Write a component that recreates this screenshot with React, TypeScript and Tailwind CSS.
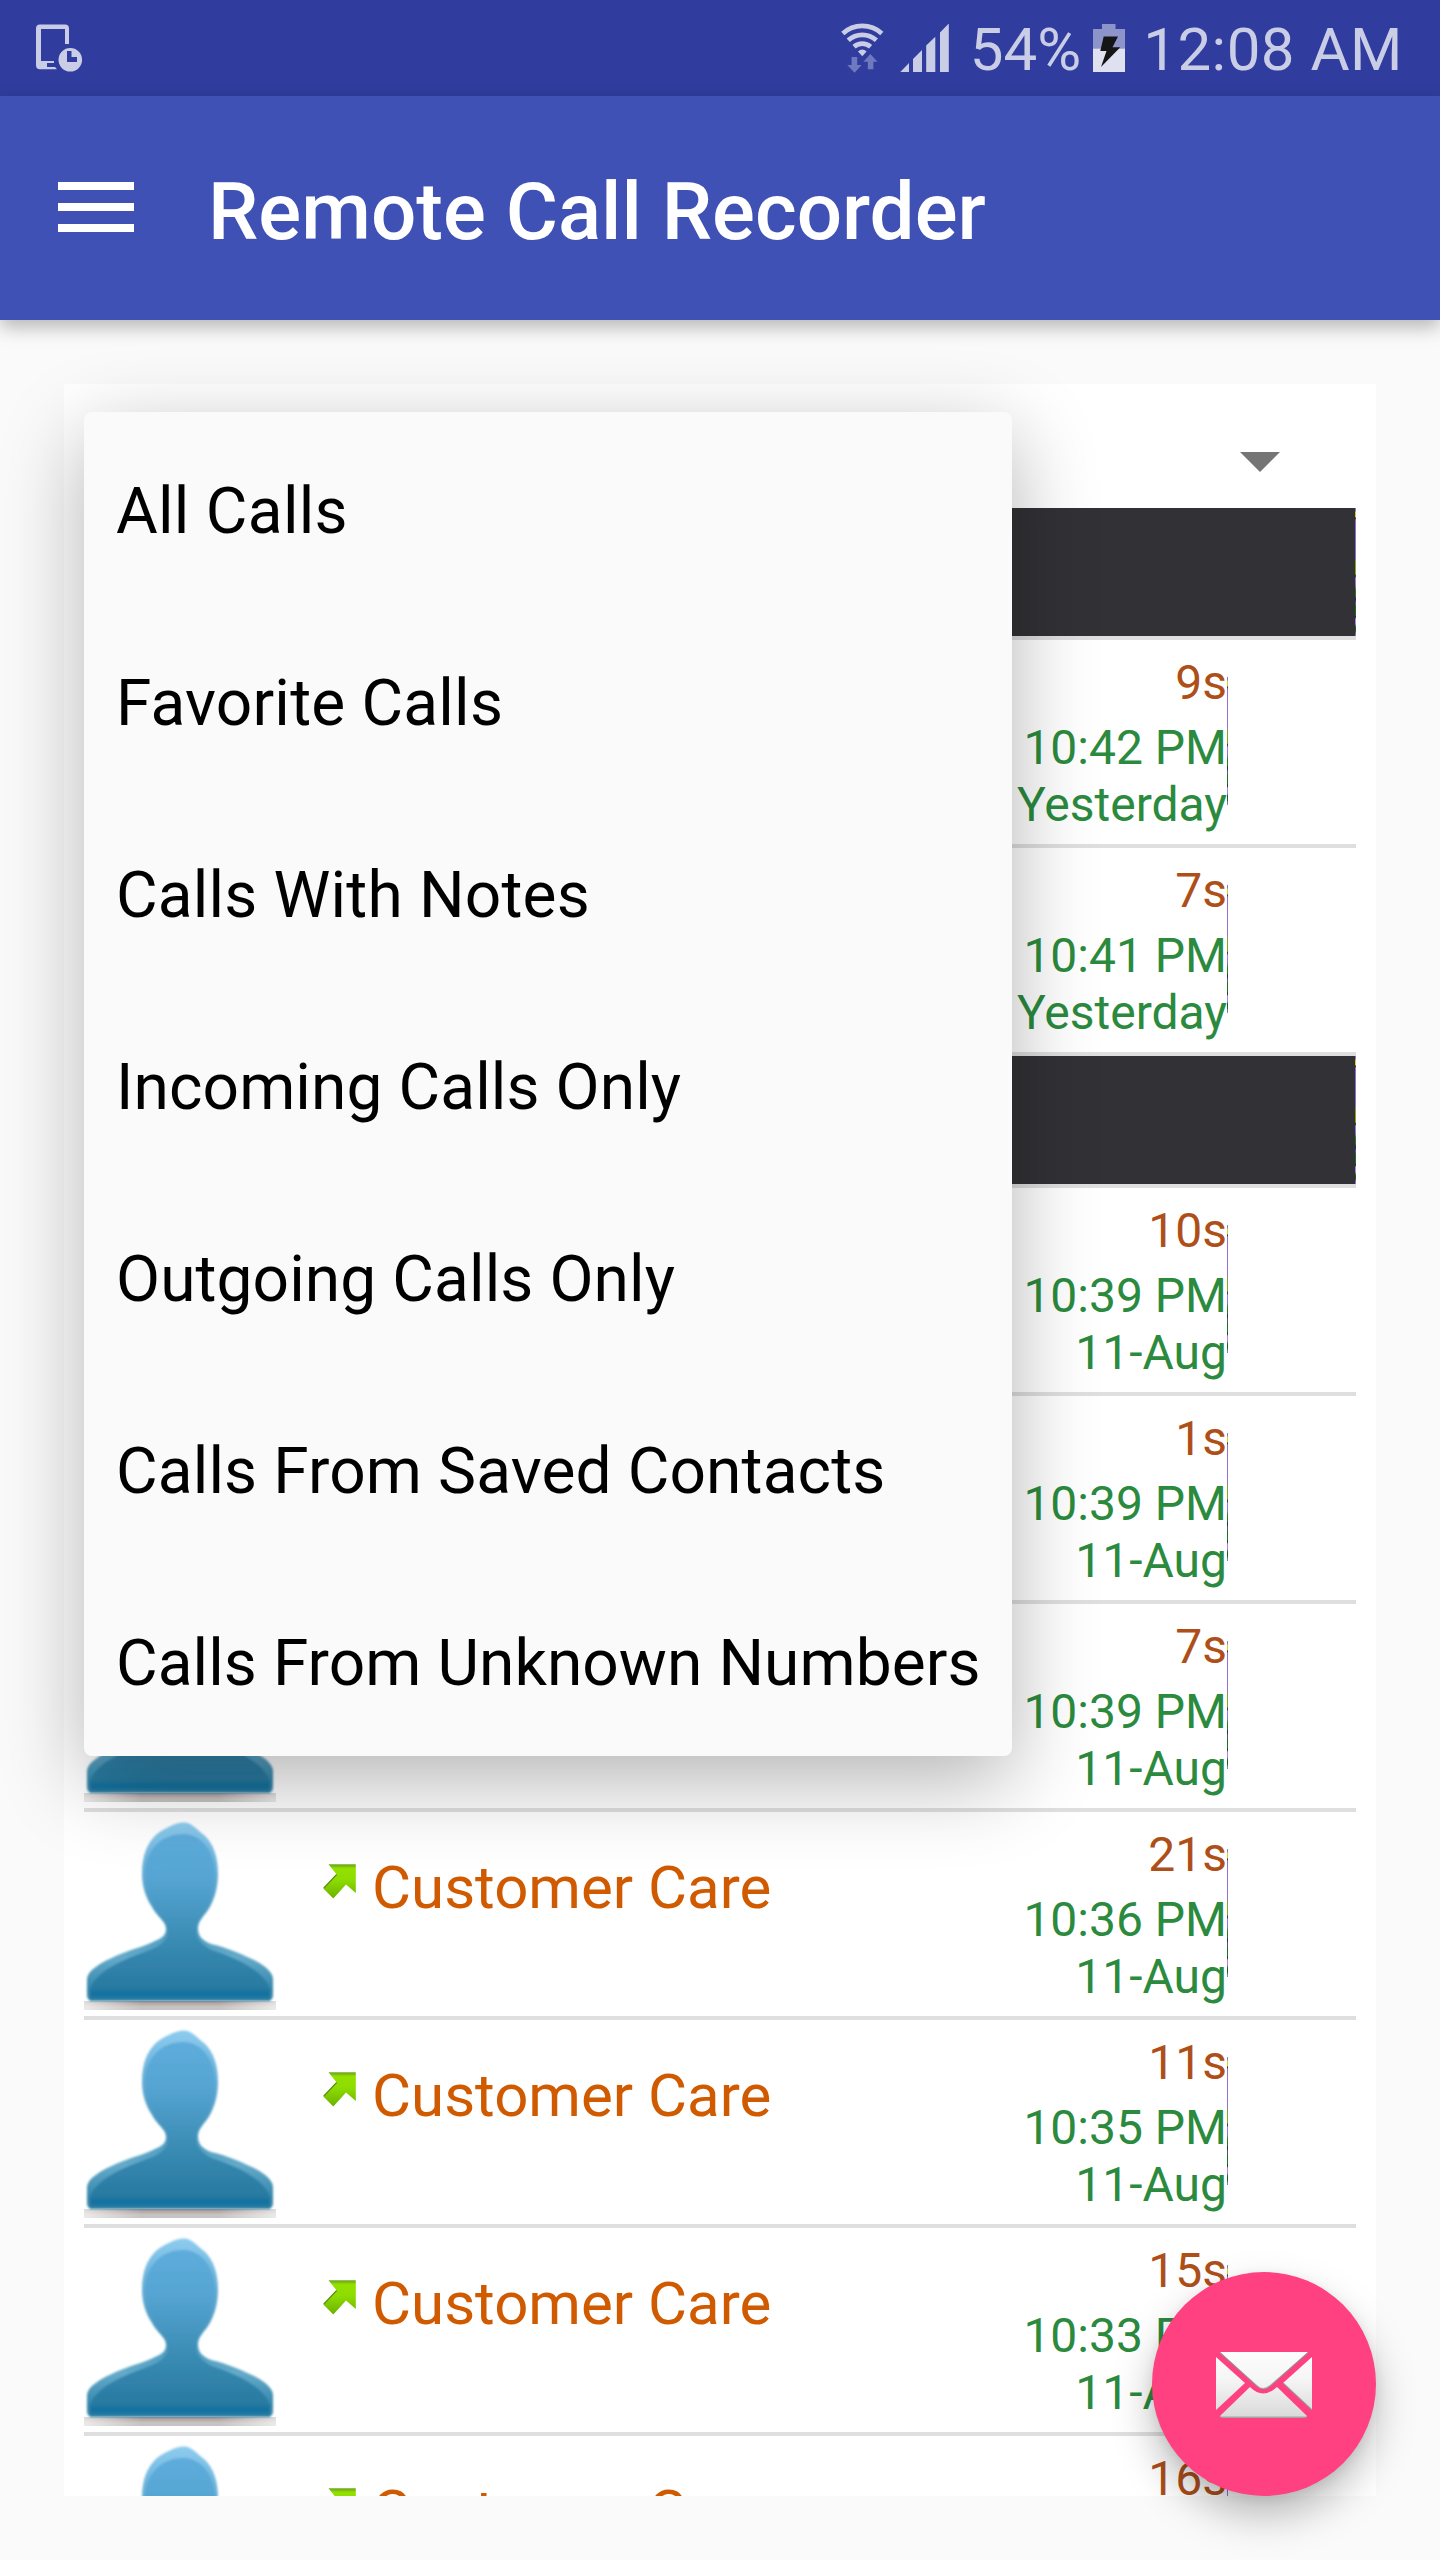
import React from "react";

type Call = { name?: string; duration: string; time: string; date: string };
type Section = { calls: Call[] };

const FILTERS = [
  { label: "All Calls", tracking: "tracking-[0.28px]" },
  { label: "Favorite Calls", tracking: "tracking-[0.2px]" },
  { label: "Calls With Notes", tracking: "tracking-[0.18px]" },
  { label: "Incoming Calls Only", tracking: "tracking-[0.1px]" },
  { label: "Outgoing Calls Only", tracking: "tracking-[0.1px]" },
  { label: "Calls From Saved Contacts", tracking: "tracking-[0.13px]" },
  { label: "Calls From Unknown Numbers", tracking: "tracking-[0.07px]" },
];

const SECTIONS: Section[] = [
  {
    calls: [
      { duration: "9s", time: "10:42 PM", date: "Yesterday" },
      { duration: "7s", time: "10:41 PM", date: "Yesterday" },
    ],
  },
  {
    calls: [
      { duration: "10s", time: "10:39 PM", date: "11-Aug" },
      { duration: "1s", time: "10:39 PM", date: "11-Aug" },
      { duration: "7s", time: "10:39 PM", date: "11-Aug" },
      { name: "Customer Care", duration: "21s", time: "10:36 PM", date: "11-Aug" },
      { name: "Customer Care", duration: "11s", time: "10:35 PM", date: "11-Aug" },
      { name: "Customer Care", duration: "15s", time: "10:33 PM", date: "11-Aug" },
      { name: "Customer Care", duration: "16s", time: "", date: "" },
    ],
  },
];

function DeviceClockIcon() {
  return (
    <svg className="ml-9 mt-6 h-12 w-12" viewBox="0 0 48 48" fill="#cacde6">
      <path
        fillRule="evenodd"
        d="M4 0.5H29Q33 0.5 33 4.5V20H29V5H5V37H18V39H11V43H19L21 45.3H4Q0 45.3 0 41V4.5Q0 0.5 4 0.5Z"
      />
      <path fillRule="evenodd" d="M34.3 24a11.8 11.8 0 1 1 0 23.6a11.8 11.8 0 0 1 0-23.6ZM31 27V38H41V33H35.5V27Z" />
    </svg>
  );
}

function WifiIcon() {
  return (
    <svg className="h-[52px] w-11" viewBox="0 0 44 52" fill="none" stroke="#cacde6" strokeWidth="4.7">
      <path d="M1.8 11.5A29 29 0 0 1 40.8 11.5" />
      <path d="M7.2 18.3A21 21 0 0 1 35.4 18.3" />
      <path d="M13 24.8A12.6 12.6 0 0 1 29.6 24.8" />
      <path d="M17 29.5Q21.3 25.5 25.6 29.5L21.3 34.2Z" fill="#cacde6" stroke="none" />
      <path d="M10.6 35h5.6v8h4.5l-7.2 7.8-7.2-7.8h4.3Z" fill="#6f79bf" stroke="none" />
      <path d="M26.8 47.3h5.6v-7.6h4l-7-7.7-7 7.7h4.4Z" fill="#6f79bf" stroke="none" />
    </svg>
  );
}

function SignalIcon() {
  return (
    <svg className="ml-[15px] h-12 w-[50px]" viewBox="0 0 50 48" fill="#cacde6">
      <path d="M0.3 48L9 39V48ZM13 35L22 26V48H13ZM26.2 21.5L35.3 12.8V48H26.2ZM40 8.5L48.8 -0.5V48H40Z" />
    </svg>
  );
}

function BatteryIcon() {
  return (
    <svg className="ml-3 h-12 w-8" viewBox="0 0 32 48">
      <path d="M9 0H22.5V5H32V25H0V5H9Z" fill="#8c94c9" />
      <path d="M0 24.7H32V48H0Z" fill="#dfe1f1" />
      <path d="M10.7 12.6H25L19.5 23.3H27.3L8 43L13.5 27H7.3Z" fill="#151515" />
    </svg>
  );
}

function Avatar() {
  return (
    <svg className="mt-1 h-[194px] w-48 shrink-0" viewBox="0 0 192 194">
      <defs>
        <linearGradient id="body" x1="0" y1="8" x2="0" y2="186" gradientUnits="userSpaceOnUse">
          <stop offset="0" stopColor="#5faede" />
          <stop offset="0.3" stopColor="#56a5d3" />
          <stop offset="0.65" stopColor="#3a8cb4" />
          <stop offset="0.92" stopColor="#287aa1" />
          <stop offset="0.96" stopColor="#0f709f" />
          <stop offset="1" stopColor="#3f86a8" />
        </linearGradient>
        <linearGradient id="rim" x1="0" y1="8" x2="0" y2="186" gradientUnits="userSpaceOnUse">
          <stop offset="0" stopColor="#8ccbee" />
          <stop offset="0.3" stopColor="#62abd5" />
          <stop offset="0.55" stopColor="#4594bb" />
          <stop offset="0.75" stopColor="#64aac9" />
          <stop offset="0.93" stopColor="#3687ac" />
          <stop offset="1" stopColor="#3f86a8" />
        </linearGradient>
        <linearGradient id="ground" x1="0" y1="184" x2="0" y2="194" gradientUnits="userSpaceOnUse">
          <stop offset="0" stopColor="#8f8a8a" />
          <stop offset="0.4" stopColor="#b8aeab" />
          <stop offset="0.7" stopColor="#c8c3c1" />
          <stop offset="1" stopColor="#c4c4c4" />
        </linearGradient>
        <linearGradient id="fade" x1="0" y1="0" x2="192" y2="0" gradientUnits="userSpaceOnUse">
          <stop offset="0" stopColor="#ffffff" stopOpacity="0.65" />
          <stop offset="0.3" stopColor="#ffffff" stopOpacity="0" />
          <stop offset="0.7" stopColor="#ffffff" stopOpacity="0" />
          <stop offset="1" stopColor="#ffffff" stopOpacity="0.65" />
        </linearGradient>
        <filter id="soft" x="-5%" y="-5%" width="110%" height="110%">
          <feGaussianBlur stdDeviation="0.9" />
        </filter>
      </defs>
      <path d="M0 185H192V194H0Z" fill="url(#ground)" />
      <path d="M0 184H192V194H0Z" fill="url(#fade)" />
      <g filter="url(#soft)">
        <path
          d="M100 6.5C108 6.5 113 14 120 19C130 28 134 42 134 58C134 72 130 85 124 94C120 100 114 105 114 112C114 119 117 124 127 128C144 132 157 138 170 144C182 150 189 157 189 163V179Q189 185 183 185H9Q3 185 3 179V163C4 156 9 153 16 148C31 139 48 134 62 129C76 123 82 121 82 113C82 105 73 101 68 91C61 80 58 70 58 57C58 40 63 27 73 18C80 13 91 6.5 100 6.5Z"
          fill="url(#rim)"
        />
        <path
          d="M99 18C118 18 131 36 131 58C131 72 127 84 121 93C117 99 111 104 112 113C112 122 116 128 128 134C158 144 180 156 186 173V185H6V173C12 155 38 144 68 133C80 128 84 122 84 113C84 104 76 100 71 91C64 80 61 70 61 57C61 36 76 18 99 18Z"
          fill="url(#body)"
        />
      </g>
    </svg>
  );
}

function OutgoingArrow() {
  return (
    <svg className="ml-[46px] mt-[51px] h-9 w-9 shrink-0" viewBox="0 0 36 36">
      <defs>
        <linearGradient id="leaf" x1="0" y1="1" x2="0" y2="36" gradientUnits="userSpaceOnUse">
          <stop offset="0" stopColor="#6fa818" />
          <stop offset="0.06" stopColor="#78b814" />
          <stop offset="0.12" stopColor="#93e000" />
          <stop offset="0.45" stopColor="#8edd00" />
          <stop offset="1" stopColor="#69b000" />
        </linearGradient>
      </defs>
      <path d="M6.5 1.2H33.8V30L24 21.5L11.3 35.5L1.3 25.5L14.7 11.5Z" fill="url(#leaf)" />
      <path d="M1.8 25L14.7 11.5" stroke="#5d8a12" strokeWidth="1.2" />
    </svg>
  );
}

/** One pixel wide strip with a speckled, multicoloured edge. */
function Seam() {
  return (
    <div className="h-32 w-px bg-[linear-gradient(to_bottom,#8a78b8_0px,#8a78b8_3px,#d8d020_4px,#d8d020_9px,#222222_10px,#9270d0_12px,#9270d0_50px,#86a81c_54px,#86a81c_66px,#222222_68px,#a080e8_70px,#9270d0_78px,#2a7a18_82px,#2a7a18_88px,#221a60_91px,#6a50a0_95px,#18701c_98px,#18701c_107px,#222222_109px,#a884f0_111px,#a884f0_116px,#18601c_119px,#18601c_123px,#9270d0_126px)]" />
  );
}

function CallRow({ call }: { call: Call }) {
  return (
    <div className="flex h-[208px] shrink-0 border-b-4 border-[#dfdfdf]">
      <Avatar />
      <OutgoingArrow />
      <div className="ml-[14px] mt-[41px] grow text-[60px] leading-[70px] text-[#d05a00]">{call.name}</div>
      <div className="flex flex-col items-end text-[48px] leading-[57px] text-[#2b8a3e]">
        <span className="mt-[14px] text-[#ae4f19]">{call.duration}</span>
        <span className="mt-2">{call.time}</span>
        <span>{call.date}</span>
      </div>
      <div className="mt-[37px] w-[129px]">
        <Seam />
      </div>
    </div>
  );
}

function FilterMenu() {
  return (
    <div className="absolute left-5 top-7 h-[1344px] w-[928px] rounded-lg bg-[#fafafa] shadow-[0_24px_84px_rgba(0,0,0,0.3)]">
      {FILTERS.map(({ label, tracking }) => (
        <div key={label} className="flex h-48 items-center whitespace-nowrap px-8 pt-2 text-[64px] leading-[76px] text-black">
          <span className={tracking}>{label}</span>
        </div>
      ))}
    </div>
  );
}

function MailButton() {
  return (
    <button className="absolute bottom-0 right-0 flex h-56 w-56 items-center justify-center rounded-full bg-[#ff4081] shadow-[0_20px_40px_rgba(0,0,0,0.26),0_4px_12px_rgba(0,0,0,0.08)]">
      <svg className="mt-[2px] h-[66px] w-24" viewBox="0 0 96 66">
        <defs>
          <linearGradient id="paper" x1="0" y1="0" x2="0" y2="66" gradientUnits="userSpaceOnUse">
            <stop offset="0" stopColor="#fcfcfc" />
            <stop offset="0.4" stopColor="#f6f6f6" />
            <stop offset="1" stopColor="#d9d9d9" />
          </linearGradient>
        </defs>
        <g fill="url(#paper)">
          <path d="M4 0H92L54 34Q47 40 41 34Z" />
          <path d="M0 5L29 31L0 58Z" />
          <path d="M96 5L67 31L96 58Z" />
          <path d="M4 64L34 35Q47 48 61 35L91 64Q90 66 88 66H7Q5 66 4 64Z" />
        </g>
        <g fill="none" stroke="#8f8f8f" strokeOpacity="0.7" strokeWidth="1.6">
          <path d="M4 1L41 34Q47 39.5 54 34L92 1" />
          <path d="M67 31L96 58M5 65.2H90" />
        </g>
      </svg>
    </button>
  );
}

export default function App() {
  return (
    <div className="flex h-[2560px] w-[1440px] flex-col overflow-hidden bg-[#fafafa] font-['Roboto',sans-serif]">
      <div className="flex h-24 shrink-0 bg-[#303d9e] text-[60px] leading-[70px] text-[#cacde6]">
        <DeviceClockIcon />
        <div className="ml-auto mr-[37px] flex">
          <div className="mt-[22px]">
            <WifiIcon />
          </div>
          <div className="mt-6">
            <SignalIcon />
          </div>
          <span className="ml-5 mt-[15px]">54%</span>
          <div className="mt-6">
            <BatteryIcon />
          </div>
          <span className="ml-[18px] mt-[15px] tracking-[0.5px]">12:08 AM</span>
        </div>
      </div>

      <header className="z-10 flex h-56 shrink-0 items-center bg-[#3f51b5] shadow-[0_7px_18px_rgba(0,0,0,0.28)]">
        <div className="mb-0.5 ml-[58px] flex w-19 flex-col gap-[13px]">
          <div className="h-2 bg-white" />
          <div className="h-2 bg-white" />
          <div className="h-2 bg-white" />
        </div>
        <h1 className="ml-[74px] mt-2 text-[80px] font-medium leading-[94px] text-white">Remote Call Recorder</h1>
      </header>

      <main className="relative mx-16 mt-16 h-[2112px] bg-white">
        <div className="flex h-full flex-col overflow-hidden px-5">
          <div className="flex h-[124px] shrink-0 items-center justify-end pr-[76px]">
            <svg className="mt-8 h-5 w-10" viewBox="0 0 40 20">
              <path d="M0 0H40L20 20Z" fill="#757575" />
            </svg>
          </div>
          {SECTIONS.map((section, i) => (
            <React.Fragment key={i}>
              <div className="flex h-[132px] shrink-0 justify-end border-b-4 border-[#dfdfdf] bg-[#323135]">
                <Seam />
              </div>
              {section.calls.map((call, j) => (
                <CallRow key={j} call={call} />
              ))}
            </React.Fragment>
          ))}
        </div>
        <FilterMenu />
        <MailButton />
      </main>
    </div>
  );
}
